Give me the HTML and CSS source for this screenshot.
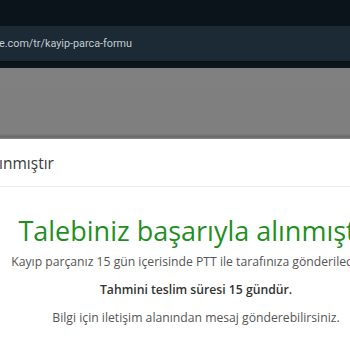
FILE: index.html
```html
<!DOCTYPE html>
<html lang="tr">
<head>
    <meta charset="UTF-8">
    <meta name="viewport" content="width=device-width, initial-scale=1.0">
    <title>Kayıp Parça Formu</title>
    <link rel="stylesheet" href="styles.css">
</head>
<body>
    <div class="chrome">
        <div class="status-bar"></div>
        <div class="url-bar"><span class="url">e.com/tr/kayip-parca-formu</span></div>
        <div class="url-shadow"></div>
    </div>

    <div class="backdrop"></div>

    <div class="panel">
        <div class="panel-head">
            <h2 class="panel-title">Talebiniz başarıyla alınmıştır</h2>
        </div>
        <div class="panel-body">
            <h1 class="success">Talebiniz başarıyla alınmıştır</h1>
            <p>Kayıp parçanız 15 gün içerisinde PTT ile tarafınıza gönderilecektir.</p>
            <p class="strong">Tahmini teslim süresi 15 gündür.</p>
            <p>Bilgi için iletişim alanından mesaj gönderebilirsiniz.</p>
        </div>
    </div>
</body>
</html>
```

FILE: styles.css
```css
html, body { margin: 0; padding: 0; }
body { width: 350px; height: 350px; overflow: hidden; background: #fff; font-family: "Open Sans", "Noto Sans", sans-serif; }

.chrome { background: #0b141a; }
.status-bar { height: 26px; }
.url-bar { height: 35px; background: #1b2a35; display: flex; align-items: center; }
.url { font-family: Roboto, "Noto Sans", sans-serif; font-size: 10.8px; color: #c3cbd0; white-space: nowrap; margin-left: -1px; }
.url-shadow { height: 7px; background: linear-gradient(#0a1217, #0e181e); }

.backdrop { height: 71px; background: linear-gradient(#808080 0, #7f7f7f 66px, #666 69px, #8a8a8a 71px); }

/* modal is wider than the screen, so both sides get cut */
.panel { width: 392px; }
.panel-head { height: 47px; border-bottom: 1px solid #eaeaea; display: flex; align-items: center; overflow: hidden; }
.panel-title { margin: 0 0 0 -150px; font-size: 15.5px; font-weight: 400; color: #3a3a3a; white-space: nowrap; }

.panel-body { text-align: center; padding-top: 25px; }
.success { margin: 0 0 4px; font-size: 27px; font-weight: 400; color: #1f8f1f; white-space: nowrap; line-height: 37px; }
.panel-body p { margin: 0 0 10px; font-size: 12.2px; line-height: 18px; color: #555; white-space: nowrap; }
.panel-body p.strong { font-weight: 600; color: #333; }
```
